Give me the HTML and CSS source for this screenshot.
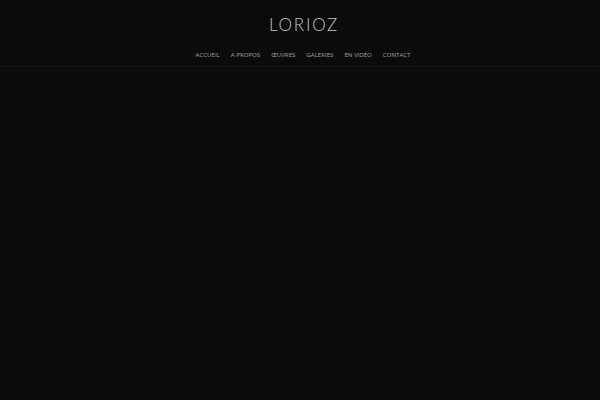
FILE: index.html
```html
<!DOCTYPE html>
<html lang="fr">
<head>
<meta charset="utf-8">
<title>Lorioz</title>
<link rel="stylesheet" href="styles.css">
</head>
<body>
<header class="site-header">
  <div class="logo">LORIOZ</div>
  <nav class="nav">
    <a href="#">ACCUEIL</a>
    <a href="#">A PROPOS</a>
    <a href="#">ŒUVRES</a>
    <a href="#">GALERIES</a>
    <a href="#">EN VIDÉO</a>
    <a href="#">CONTACT</a>
  </nav>
</header>
<main class="content"></main>
</body>
</html>
```
FILE: styles.css
```css
html, body {
  margin: 0;
  padding: 0;
  background: #0b0b0b;
  height: 100%;
}
body {
  font-family: "Open Sans", "DejaVu Sans", sans-serif;
}
.site-header {
  display: flex;
  flex-direction: column;
  align-items: center;
  border-bottom: 1px solid #151515;
  height: 67px;
  box-sizing: border-box;
  padding-left: 6px;
}
.logo {
  margin-top: 13px;
  font-family: "Lato", "Open Sans", sans-serif;
  font-weight: 300;
  font-size: 17px;
  letter-spacing: 1.8px;
  color: #c4c4c4;
  line-height: 24px;
  padding-left: 2px;
}
.nav {
  margin-top: 12px;
  display: flex;
  gap: 11px;
}
.nav a {
  color: #a0a0a0;
  text-decoration: none;
  font-size: 6.1px;
  line-height: 12px;
}
```
